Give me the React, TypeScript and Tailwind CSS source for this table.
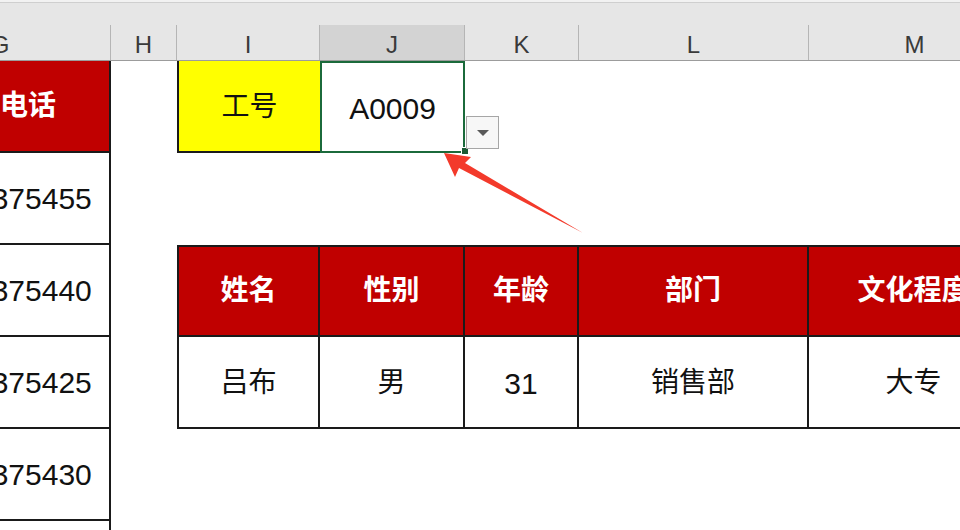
const FONT = "font-['Liberation_Sans','Noto_Sans_CJK_SC',sans-serif]";

const phones = ["13512375455", "13512375440", "13512375425", "13512375430", "13512375410"];

function ColHeader({ label, w, active, last }: { label: string; w: string; active?: boolean; last?: boolean }) {
  return (
    <div
      className={`${w} shrink-0 h-full flex items-end justify-center pb-[3px] leading-none ${
        active ? "bg-[#d3d3d3]" : ""
      } ${last ? "" : "border-r border-[#b5b5b5]"}`}
    >
      {label}
    </div>
  );
}

function GCell({ children, head }: { children?: React.ReactNode; head?: boolean }) {
  return (
    <div
      className={`w-[111px] shrink-0 h-full overflow-hidden border-r-2 border-b-2 border-[#1a1a1a] ${
        head ? "bg-[#c00000] text-white font-bold text-[28px]" : "bg-white text-[#111] text-[30px]"
      }`}
    >
      <div className="w-[222px] ml-[-111px] h-full flex items-center justify-center whitespace-nowrap">
        {children}
      </div>
    </div>
  );
}

export default function App() {
  const tableCols = [
    { w: "w-[143px]", head: "姓名", val: "吕布", num: false, first: true },
    { w: "w-[145px]", head: "性别", val: "男", num: false },
    { w: "w-[114px]", head: "年龄", val: "31", num: true },
    { w: "w-[230px]", head: "部门", val: "销售部", num: false },
    { w: "w-[211px]", head: "文化程度", val: "大专", num: false },
  ];

  return (
    <div className={`relative w-[960px] h-[530px] overflow-hidden bg-white ${FONT}`}>
      {/* ── column header band ── */}
      <div className="h-[3px] bg-[#f2f2f2] border-b border-[#cfcfcf]" />
      <div className="h-[22px] bg-[#e6e6e6]" />
      <div className="flex h-[36px] bg-[#e6e6e6] border-b border-[#9c9c9c] text-[24px] text-[#3a3a3a]">
        <div className="w-[111px] shrink-0 h-full overflow-hidden border-r border-[#b5b5b5]">
          <div className="w-[222px] ml-[-111px] h-full flex items-end justify-center pb-[3px] leading-none">G</div>
        </div>
        <ColHeader label="H" w="w-[66px]" />
        <ColHeader label="I" w="w-[143px]" />
        <ColHeader label="J" w="w-[145px]" active />
        <ColHeader label="K" w="w-[114px]" />
        <ColHeader label="L" w="w-[230px]" />
        <ColHeader label="M" w="w-[211px]" last />
      </div>

      {/* ── row 1: lookup key ── */}
      <div className="relative flex h-[92px]">
        <GCell head>联系电话</GCell>
        <div className="w-[66px] shrink-0" />
        <div className="w-[143px] shrink-0 h-full bg-[#ffff00] border-l-2 border-b-2 border-[#1a1a1a] flex items-center justify-center pt-[2px] text-[28px] text-[#111]">
          工号
        </div>
        <div className="w-[145px] shrink-0 h-full border-2 border-[#1b6a3b] flex items-center justify-center pt-[2px] text-[30px] text-[#111]">
          A0009
        </div>
        {/* fill handle */}
        <div className="absolute left-[461px] top-[86px] w-[8px] h-[8px] bg-[#1b5a34] border border-white" />
        {/* validation dropdown */}
        <div className="absolute left-[466px] top-[55px] w-[33px] h-[33px] bg-[#f7f7f7] border border-[#a6a6a6] flex items-center justify-center">
          <div className="w-0 h-0 border-l-[6px] border-r-[6px] border-t-[6px] border-l-transparent border-r-transparent border-t-[#595959]" />
        </div>
      </div>

      {/* ── row 2: empty ── */}
      <div className="flex h-[92px]">
        <GCell>{phones[0]}</GCell>
      </div>

      {/* ── row 3: result header ── */}
      <div className="flex h-[92px]">
        <GCell>{phones[1]}</GCell>
        <div className="w-[66px] shrink-0" />
        {tableCols.map((c) => (
          <div
            key={c.head}
            className={`${c.w} shrink-0 h-full bg-[#c00000] border-t-2 border-r-2 border-b-2 border-[#1a1a1a] ${
              c.first ? "border-l-2" : ""
            } flex items-center justify-center text-white font-bold text-[28px] whitespace-nowrap`}
          >
            {c.head}
          </div>
        ))}
      </div>

      {/* ── row 4: result values ── */}
      <div className="flex h-[92px]">
        <GCell>{phones[2]}</GCell>
        <div className="w-[66px] shrink-0" />
        {tableCols.map((c) => (
          <div
            key={c.head}
            className={`${c.w} shrink-0 h-full bg-white border-r-2 border-b-2 border-[#1a1a1a] ${
              c.first ? "border-l-2" : ""
            } flex items-center justify-center pt-[2px] text-[#111] whitespace-nowrap ${c.num ? "text-[30px]" : "text-[28px]"}`}
          >
            {c.val}
          </div>
        ))}
      </div>

      {/* ── rows 5–6 ── */}
      <div className="flex h-[92px]">
        <GCell>{phones[3]}</GCell>
      </div>
      <div className="flex h-[92px]">
        <GCell>{phones[4]}</GCell>
      </div>

      {/* ── annotation arrow ── */}
      <svg className="absolute left-0 top-0 pointer-events-none" width="960" height="530" viewBox="0 0 960 530">
        <polygon points="444,153 471,157 465,163 583,233 459,168 455,177" fill="#f33a2b" />
      </svg>
    </div>
  );
}
